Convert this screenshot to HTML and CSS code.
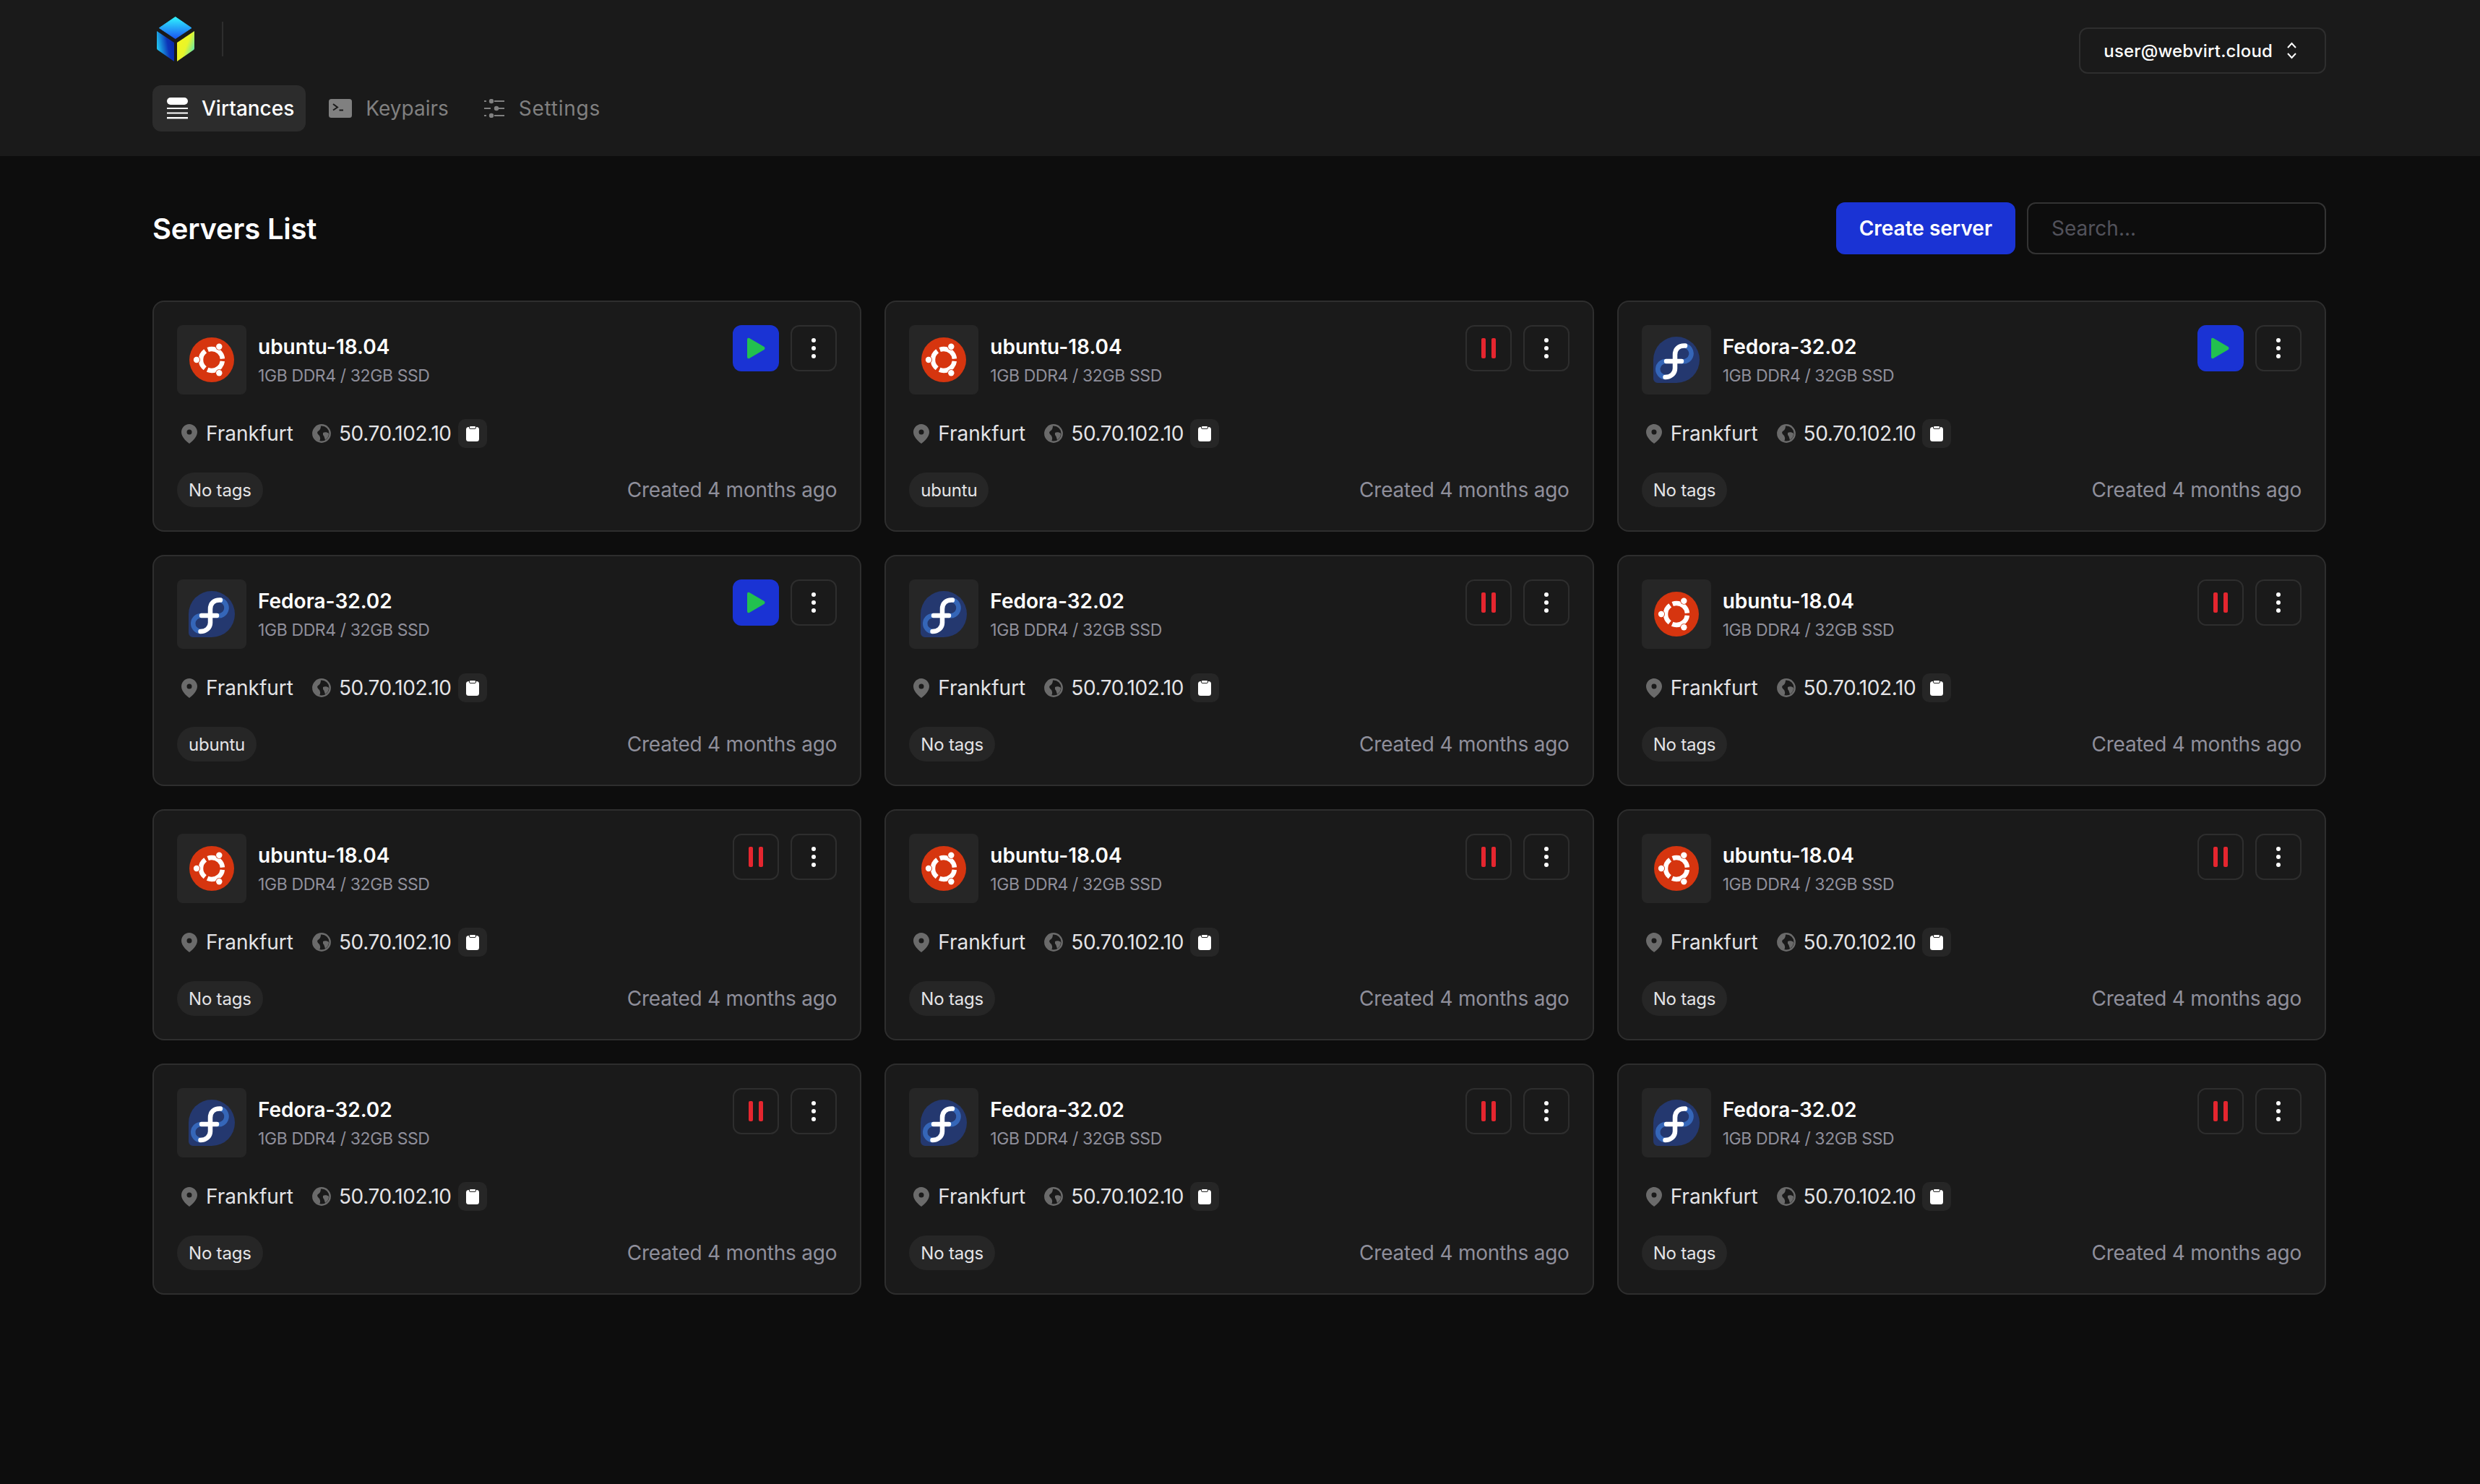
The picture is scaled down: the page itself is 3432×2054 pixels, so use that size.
FILE: index.html
```html
<!DOCTYPE html>
<html lang="en">
<head>
    <meta charset="UTF-8">
    <meta name="viewport" content="width=device-width, initial-scale=1.0">
    <title>Servers List</title>
    <link rel="stylesheet" href="styles.css">
</head>
<body>

    <!-- shared icons -->
    <svg class="sprites" width="0" height="0" aria-hidden="true">
        <defs>
            <linearGradient id="cube-top" x1="0" y1="0" x2="0" y2="1">
                <stop offset="0" stop-color="#2ff5ff"/>
                <stop offset="1" stop-color="#1a55f0"/>
            </linearGradient>
            <linearGradient id="cube-left" x1="0" y1="0.7" x2="1" y2="0.4">
                <stop offset="0" stop-color="#22d3f5"/>
                <stop offset="0.65" stop-color="#0c34b8"/>
                <stop offset="1" stop-color="#0a2aa5"/>
            </linearGradient>
            <linearGradient id="cube-right" x1="0" y1="0.2" x2="1" y2="0.9">
                <stop offset="0" stop-color="#f6f51c"/>
                <stop offset="0.5" stop-color="#e8f52a"/>
                <stop offset="1" stop-color="#2fe0d8"/>
            </linearGradient>
        </defs>
        <symbol id="ubuntu" viewBox="0 0 62 62">
            <circle cx="31" cy="31" r="31" fill="#d6350f"/>
            <circle cx="31" cy="31" r="15" fill="none" stroke="#fff" stroke-width="6.500" stroke-dasharray="27.400 4" stroke-dashoffset="-2"/>
            <circle cx="41.300" cy="12.700" r="5" fill="#d6350f"/>
            <circle cx="10" cy="31" r="5" fill="#d6350f"/>
            <circle cx="41.300" cy="49.300" r="5" fill="#d6350f"/>
            <circle cx="41.300" cy="12.700" r="4.200" fill="#fff"/>
            <circle cx="10" cy="31" r="4.200" fill="#fff"/>
            <circle cx="41.300" cy="49.300" r="4.200" fill="#fff"/>
        </symbol>
        <symbol id="fedora" viewBox="0 0 64 64">
            <path d="M32 0A32 32 0 1 1 32 64H6A6 6 0 0 1 0 58V32A32 32 0 0 1 32 0Z" fill="#24386f"/>
            <path d="M44 12.500A10.800 10.800 0 0 1 39 34M18 34A11 11 0 0 0 16.500 56" fill="none" stroke="#3566b8" stroke-width="6.500"/>
            <path d="M44 12.500C35 12 30 17 30 25V44C30 51 24 56 16.500 56M18 34H39" fill="none" stroke="#fff" stroke-width="6.500" stroke-linecap="round"/>
        </symbol>
        <symbol id="pin" viewBox="0 0 22 27">
            <path fill-rule="evenodd" d="M11 0C17 0 22 5 22 11C22 18 15 24 11 27C7 24 0 18 0 11C0 5 5 0 11 0ZM11 7.500A3.500 3.500 0 1 0 11 14.500A3.500 3.500 0 1 0 11 7.500Z" fill="#6b6b6b"/>
        </symbol>
        <symbol id="globe" viewBox="0 0 26 26">
            <circle cx="13" cy="13" r="11.700" fill="none" stroke="#6b6b6b" stroke-width="2.400"/>
            <path d="M9 2.500C5 4 2 8 2 13C2 18 5 22 10 23.500C12 21 11 18 10 16C8 14 6 12 8 10C10 9 12 7 12 2Z" fill="#6b6b6b"/>
            <path d="M15 12C17 11 21 11 23 13C23 17 21 20 18 22C17 19 17 17 15 15Z" fill="#6b6b6b"/>
        </symbol>
        <symbol id="clip" viewBox="0 0 18 22">
            <rect y="2" width="18" height="20" rx="3.500" fill="#fff"/>
            <rect x="4.500" y="0.500" width="9" height="4" rx="1.500" fill="#fff" stroke="#262626"/>
        </symbol>
    </svg>

    <header class="topbar">
        <div class="topbar-left">
            <div class="brand">
                <svg class="logo" viewBox="0 0 52 62" width="52" height="62">
                    <path d="M25.700 0.500L48 15.700L25.700 30.500L3.400 15.700Z" stroke="url(#cube-top)" stroke-width="1" stroke-linejoin="round" fill="url(#cube-top)"/>
                    <path d="M0 20L24 36V62L1 46Q0 45 0 44Z" fill="url(#cube-left)"/>
                    <path d="M28 36L52 20V44Q52 45 51 46L28 62Z" fill="url(#cube-right)"/>
                </svg>
                <span class="brand-line"></span>
            </div>
            <nav class="nav">
                <a class="nav-item active" href="#">
                    <svg viewBox="0 0 29 30" width="29" height="30">
                        <rect width="29" height="10" rx="5" fill="#fff"/>
                        <rect y="14" width="29" height="2" fill="#fff"/>
                        <rect y="20.500" width="29" height="2" fill="#fff"/>
                        <rect y="27" width="29" height="2.400" fill="#fff"/>
                    </svg>
                    Virtances
                </a>
                <a class="nav-item" href="#">
                    <svg viewBox="0 0 32 26" width="32" height="26">
                        <rect width="32" height="26" rx="3.500" fill="#808080"/>
                        <path d="M6 7L12 11.500L6 15.500M14.500 15.500H20" fill="none" stroke="#1a1a1a" stroke-width="2"/>
                    </svg>
                    Keypairs
                </a>
                <a class="nav-item nav-settings" href="#">
                    <svg viewBox="0 0 28 26" width="28" height="26">
                        <path d="M0 3H3M14 3H28M0 13H9M20 13H28M0 23H3M14 23H28" stroke="#808080" stroke-width="2"/>
                        <circle cx="10" cy="3" r="3.200" fill="#808080"/>
                        <circle cx="17" cy="13" r="3.200" fill="#808080"/>
                        <circle cx="10" cy="23" r="3.200" fill="#808080"/>
                    </svg>
                    Settings
                </a>
            </nav>
        </div>
        <button class="user-btn" type="button">
            user@webvirt.cloud
            <svg viewBox="0 0 15 24" width="15" height="24">
                <path d="M2 8L7.500 2L13 8M2 16L7.500 22L13 16" fill="none" stroke="#fff" stroke-width="2"/>
            </svg>
        </button>
    </header>

    <main class="page">
        <div class="toolbar">
            <h1>Servers List</h1>
            <div class="toolbar-right">
                <button class="create-btn" type="button">Create server</button>
                <input class="search" type="text" placeholder="Search...">
            </div>
        </div>

        <div class="server-grid">

            <article class="card">
                <div class="card-top">
                    <div class="os-box"><svg class="os-ubuntu"><use href="#ubuntu"/></svg></div>
                    <div class="card-name"><h2>ubuntu-18.04</h2><p>1GB DDR4 / 32GB SSD</p></div>
                    <button class="act act-play" type="button"><svg viewBox="0 0 25 30" width="25" height="30"><path d="M0 3Q0 0 3 1L23.500 13Q25.500 15 23.500 17L3 29Q0 30 0 27Z" fill="#22c04f"/></svg></button>
                    <button class="act" type="button"><span class="dots"><i></i><i></i><i></i></span></button>
                </div>
                <div class="card-info">
                    <svg class="ico-pin"><use href="#pin"/></svg><span class="city">Frankfurt</span>
                    <svg class="ico-globe"><use href="#globe"/></svg><span class="ip">50.70.102.10</span>
                    <button class="copy" type="button"><svg><use href="#clip"/></svg></button>
                </div>
                <div class="card-foot"><span class="tag">No tags</span><span class="age">Created 4 months ago</span></div>
            </article>

            <article class="card">
                <div class="card-top">
                    <div class="os-box"><svg class="os-ubuntu"><use href="#ubuntu"/></svg></div>
                    <div class="card-name"><h2>ubuntu-18.04</h2><p>1GB DDR4 / 32GB SSD</p></div>
                    <button class="act" type="button"><span class="pause"><i></i><i></i></span></button>
                    <button class="act" type="button"><span class="dots"><i></i><i></i><i></i></span></button>
                </div>
                <div class="card-info">
                    <svg class="ico-pin"><use href="#pin"/></svg><span class="city">Frankfurt</span>
                    <svg class="ico-globe"><use href="#globe"/></svg><span class="ip">50.70.102.10</span>
                    <button class="copy" type="button"><svg><use href="#clip"/></svg></button>
                </div>
                <div class="card-foot"><span class="tag">ubuntu</span><span class="age">Created 4 months ago</span></div>
            </article>

            <article class="card">
                <div class="card-top">
                    <div class="os-box"><svg class="os-fedora"><use href="#fedora"/></svg></div>
                    <div class="card-name"><h2>Fedora-32.02</h2><p>1GB DDR4 / 32GB SSD</p></div>
                    <button class="act act-play" type="button"><svg viewBox="0 0 25 30" width="25" height="30"><path d="M0 3Q0 0 3 1L23.500 13Q25.500 15 23.500 17L3 29Q0 30 0 27Z" fill="#22c04f"/></svg></button>
                    <button class="act" type="button"><span class="dots"><i></i><i></i><i></i></span></button>
                </div>
                <div class="card-info">
                    <svg class="ico-pin"><use href="#pin"/></svg><span class="city">Frankfurt</span>
                    <svg class="ico-globe"><use href="#globe"/></svg><span class="ip">50.70.102.10</span>
                    <button class="copy" type="button"><svg><use href="#clip"/></svg></button>
                </div>
                <div class="card-foot"><span class="tag">No tags</span><span class="age">Created 4 months ago</span></div>
            </article>

            <article class="card">
                <div class="card-top">
                    <div class="os-box"><svg class="os-fedora"><use href="#fedora"/></svg></div>
                    <div class="card-name"><h2>Fedora-32.02</h2><p>1GB DDR4 / 32GB SSD</p></div>
                    <button class="act act-play" type="button"><svg viewBox="0 0 25 30" width="25" height="30"><path d="M0 3Q0 0 3 1L23.500 13Q25.500 15 23.500 17L3 29Q0 30 0 27Z" fill="#22c04f"/></svg></button>
                    <button class="act" type="button"><span class="dots"><i></i><i></i><i></i></span></button>
                </div>
                <div class="card-info">
                    <svg class="ico-pin"><use href="#pin"/></svg><span class="city">Frankfurt</span>
                    <svg class="ico-globe"><use href="#globe"/></svg><span class="ip">50.70.102.10</span>
                    <button class="copy" type="button"><svg><use href="#clip"/></svg></button>
                </div>
                <div class="card-foot"><span class="tag">ubuntu</span><span class="age">Created 4 months ago</span></div>
            </article>

            <article class="card">
                <div class="card-top">
                    <div class="os-box"><svg class="os-fedora"><use href="#fedora"/></svg></div>
                    <div class="card-name"><h2>Fedora-32.02</h2><p>1GB DDR4 / 32GB SSD</p></div>
                    <button class="act" type="button"><span class="pause"><i></i><i></i></span></button>
                    <button class="act" type="button"><span class="dots"><i></i><i></i><i></i></span></button>
                </div>
                <div class="card-info">
                    <svg class="ico-pin"><use href="#pin"/></svg><span class="city">Frankfurt</span>
                    <svg class="ico-globe"><use href="#globe"/></svg><span class="ip">50.70.102.10</span>
                    <button class="copy" type="button"><svg><use href="#clip"/></svg></button>
                </div>
                <div class="card-foot"><span class="tag">No tags</span><span class="age">Created 4 months ago</span></div>
            </article>

            <article class="card">
                <div class="card-top">
                    <div class="os-box"><svg class="os-ubuntu"><use href="#ubuntu"/></svg></div>
                    <div class="card-name"><h2>ubuntu-18.04</h2><p>1GB DDR4 / 32GB SSD</p></div>
                    <button class="act" type="button"><span class="pause"><i></i><i></i></span></button>
                    <button class="act" type="button"><span class="dots"><i></i><i></i><i></i></span></button>
                </div>
                <div class="card-info">
                    <svg class="ico-pin"><use href="#pin"/></svg><span class="city">Frankfurt</span>
                    <svg class="ico-globe"><use href="#globe"/></svg><span class="ip">50.70.102.10</span>
                    <button class="copy" type="button"><svg><use href="#clip"/></svg></button>
                </div>
                <div class="card-foot"><span class="tag">No tags</span><span class="age">Created 4 months ago</span></div>
            </article>

            <article class="card">
                <div class="card-top">
                    <div class="os-box"><svg class="os-ubuntu"><use href="#ubuntu"/></svg></div>
                    <div class="card-name"><h2>ubuntu-18.04</h2><p>1GB DDR4 / 32GB SSD</p></div>
                    <button class="act" type="button"><span class="pause"><i></i><i></i></span></button>
                    <button class="act" type="button"><span class="dots"><i></i><i></i><i></i></span></button>
                </div>
                <div class="card-info">
                    <svg class="ico-pin"><use href="#pin"/></svg><span class="city">Frankfurt</span>
                    <svg class="ico-globe"><use href="#globe"/></svg><span class="ip">50.70.102.10</span>
                    <button class="copy" type="button"><svg><use href="#clip"/></svg></button>
                </div>
                <div class="card-foot"><span class="tag">No tags</span><span class="age">Created 4 months ago</span></div>
            </article>

            <article class="card">
                <div class="card-top">
                    <div class="os-box"><svg class="os-ubuntu"><use href="#ubuntu"/></svg></div>
                    <div class="card-name"><h2>ubuntu-18.04</h2><p>1GB DDR4 / 32GB SSD</p></div>
                    <button class="act" type="button"><span class="pause"><i></i><i></i></span></button>
                    <button class="act" type="button"><span class="dots"><i></i><i></i><i></i></span></button>
                </div>
                <div class="card-info">
                    <svg class="ico-pin"><use href="#pin"/></svg><span class="city">Frankfurt</span>
                    <svg class="ico-globe"><use href="#globe"/></svg><span class="ip">50.70.102.10</span>
                    <button class="copy" type="button"><svg><use href="#clip"/></svg></button>
                </div>
                <div class="card-foot"><span class="tag">No tags</span><span class="age">Created 4 months ago</span></div>
            </article>

            <article class="card">
                <div class="card-top">
                    <div class="os-box"><svg class="os-ubuntu"><use href="#ubuntu"/></svg></div>
                    <div class="card-name"><h2>ubuntu-18.04</h2><p>1GB DDR4 / 32GB SSD</p></div>
                    <button class="act" type="button"><span class="pause"><i></i><i></i></span></button>
                    <button class="act" type="button"><span class="dots"><i></i><i></i><i></i></span></button>
                </div>
                <div class="card-info">
                    <svg class="ico-pin"><use href="#pin"/></svg><span class="city">Frankfurt</span>
                    <svg class="ico-globe"><use href="#globe"/></svg><span class="ip">50.70.102.10</span>
                    <button class="copy" type="button"><svg><use href="#clip"/></svg></button>
                </div>
                <div class="card-foot"><span class="tag">No tags</span><span class="age">Created 4 months ago</span></div>
            </article>

            <article class="card">
                <div class="card-top">
                    <div class="os-box"><svg class="os-fedora"><use href="#fedora"/></svg></div>
                    <div class="card-name"><h2>Fedora-32.02</h2><p>1GB DDR4 / 32GB SSD</p></div>
                    <button class="act" type="button"><span class="pause"><i></i><i></i></span></button>
                    <button class="act" type="button"><span class="dots"><i></i><i></i><i></i></span></button>
                </div>
                <div class="card-info">
                    <svg class="ico-pin"><use href="#pin"/></svg><span class="city">Frankfurt</span>
                    <svg class="ico-globe"><use href="#globe"/></svg><span class="ip">50.70.102.10</span>
                    <button class="copy" type="button"><svg><use href="#clip"/></svg></button>
                </div>
                <div class="card-foot"><span class="tag">No tags</span><span class="age">Created 4 months ago</span></div>
            </article>

            <article class="card">
                <div class="card-top">
                    <div class="os-box"><svg class="os-fedora"><use href="#fedora"/></svg></div>
                    <div class="card-name"><h2>Fedora-32.02</h2><p>1GB DDR4 / 32GB SSD</p></div>
                    <button class="act" type="button"><span class="pause"><i></i><i></i></span></button>
                    <button class="act" type="button"><span class="dots"><i></i><i></i><i></i></span></button>
                </div>
                <div class="card-info">
                    <svg class="ico-pin"><use href="#pin"/></svg><span class="city">Frankfurt</span>
                    <svg class="ico-globe"><use href="#globe"/></svg><span class="ip">50.70.102.10</span>
                    <button class="copy" type="button"><svg><use href="#clip"/></svg></button>
                </div>
                <div class="card-foot"><span class="tag">No tags</span><span class="age">Created 4 months ago</span></div>
            </article>

            <article class="card">
                <div class="card-top">
                    <div class="os-box"><svg class="os-fedora"><use href="#fedora"/></svg></div>
                    <div class="card-name"><h2>Fedora-32.02</h2><p>1GB DDR4 / 32GB SSD</p></div>
                    <button class="act" type="button"><span class="pause"><i></i><i></i></span></button>
                    <button class="act" type="button"><span class="dots"><i></i><i></i><i></i></span></button>
                </div>
                <div class="card-info">
                    <svg class="ico-pin"><use href="#pin"/></svg><span class="city">Frankfurt</span>
                    <svg class="ico-globe"><use href="#globe"/></svg><span class="ip">50.70.102.10</span>
                    <button class="copy" type="button"><svg><use href="#clip"/></svg></button>
                </div>
                <div class="card-foot"><span class="tag">No tags</span><span class="age">Created 4 months ago</span></div>
            </article>

        </div>
    </main>

</body>
</html>
```

FILE: styles.css
```css
* { box-sizing: border-box; }
body { margin: 0; background: #0d0d0d; color: #fff; font-family: Inter, "Noto Sans", sans-serif; }
button { font-family: inherit; cursor: pointer; }
.sprites { display: block; height: 0; }

/* header */
.topbar { display: flex; justify-content: space-between; align-items: flex-start; height: 216px; padding: 23px 213px 0 211px; background: #1a1a1a; }
.brand { display: flex; align-items: center; height: 62px; padding-left: 6px; }
.logo { display: block; }
.brand-line { width: 2px; height: 48px; margin-left: 38px; background: #2e2e2e; }
.nav { display: flex; gap: 12px; margin-top: 33px; }
.nav-item { display: flex; align-items: center; gap: 19px; height: 64px; padding: 0 16px 0 20px; border-radius: 12px; font-size: 28px; font-weight: 400; color: #808080; text-decoration: none; }
.nav-item.active { background: #2c2c2c; color: #fff; font-weight: 500; }
.nav-settings { margin-left: 1px; gap: 20px; letter-spacing: 0.75px; }
.user-btn { display: flex; align-items: center; gap: 19px; height: 64px; margin-top: 15px; padding: 0 38px 0 32px; background: transparent; border: 2px solid #2e2e2e; border-radius: 12px; color: #fff; font-size: 24px; font-weight: 500; letter-spacing: 0.15px; }

/* toolbar */
.page { padding: 64px 213px 0 211px; }
.toolbar { display: flex; justify-content: space-between; align-items: center; height: 72px; margin-bottom: 64px; }
.toolbar h1 { margin: 0; font-size: 40px; font-weight: 600; letter-spacing: -0.2px; }
.toolbar-right { display: flex; gap: 16px; }
.create-btn { height: 72px; padding: 0 32px; background: #1a33d4; border: none; border-radius: 12px; color: #fff; font-size: 28px; font-weight: 600; }
.search { width: 414px; height: 72px; padding: 0 32px; background: #0d0d0d; border: 2px solid #333; border-radius: 12px; color: #fff; font-family: inherit; font-size: 28px; }
.search::placeholder { color: #52525b; }

/* cards */
.server-grid { display: grid; grid-template-columns: repeat(3, 1fr); gap: 32px; }
.card { height: 320px; padding: 32px; background: #1a1a1a; border: 2px solid #2e2e2e; border-radius: 16px; }
.card-top { display: flex; align-items: flex-start; gap: 16px; }
.os-box { display: flex; align-items: center; justify-content: center; flex: none; width: 96px; height: 96px; background: #262626; border-radius: 8px; }
.os-ubuntu { width: 62px; height: 62px; }
.os-fedora { width: 64px; height: 64px; }
.card-name { flex: 1; padding-top: 13px; }
.card-name h2 { margin: 0 0 9px; font-size: 28px; line-height: 34px; font-weight: 600; }
.card-name p { margin: 0; font-size: 23px; line-height: 28px; letter-spacing: -0.4px; color: #8f8f9b; }
.act { display: flex; align-items: center; justify-content: center; flex: none; width: 64px; height: 64px; padding: 0; background: transparent; border: 2px solid #2e2e2e; border-radius: 12px; }
.act-play { background: #1a33d4; border-color: #1a33d4; }
.dots { display: flex; flex-direction: column; gap: 5px; }
.dots i { display: block; width: 6px; height: 6px; background: #fff; border-radius: 50%; }
.pause { display: flex; gap: 8px; }
.pause i { display: block; width: 6px; height: 28px; background: #e5262f; border-radius: 2px; }

.card-info { display: flex; align-items: center; height: 40px; margin-top: 34px; color: #e4e4e7; font-size: 28px; }
.ico-pin { width: 22px; height: 27px; margin: 0 12px 0 6px; }
.ico-globe { width: 26px; height: 26px; margin: 0 11px 0 26px; }
.ip { letter-spacing: -0.4px; }
.copy { display: flex; align-items: center; justify-content: center; width: 40px; height: 40px; margin-left: 9px; padding: 0; background: #262626; border: none; border-radius: 10px; }
.copy svg { width: 18px; height: 22px; }

.card-foot { display: flex; justify-content: space-between; align-items: center; height: 48px; margin-top: 34px; }
.tag { display: flex; align-items: center; height: 48px; padding: 0 16px; background: #262626; border-radius: 24px; color: #e4e4e7; font-size: 24px; letter-spacing: -0.2px; }
.age { font-size: 28px; letter-spacing: -0.22px; color: #8f8f9b; }
```
